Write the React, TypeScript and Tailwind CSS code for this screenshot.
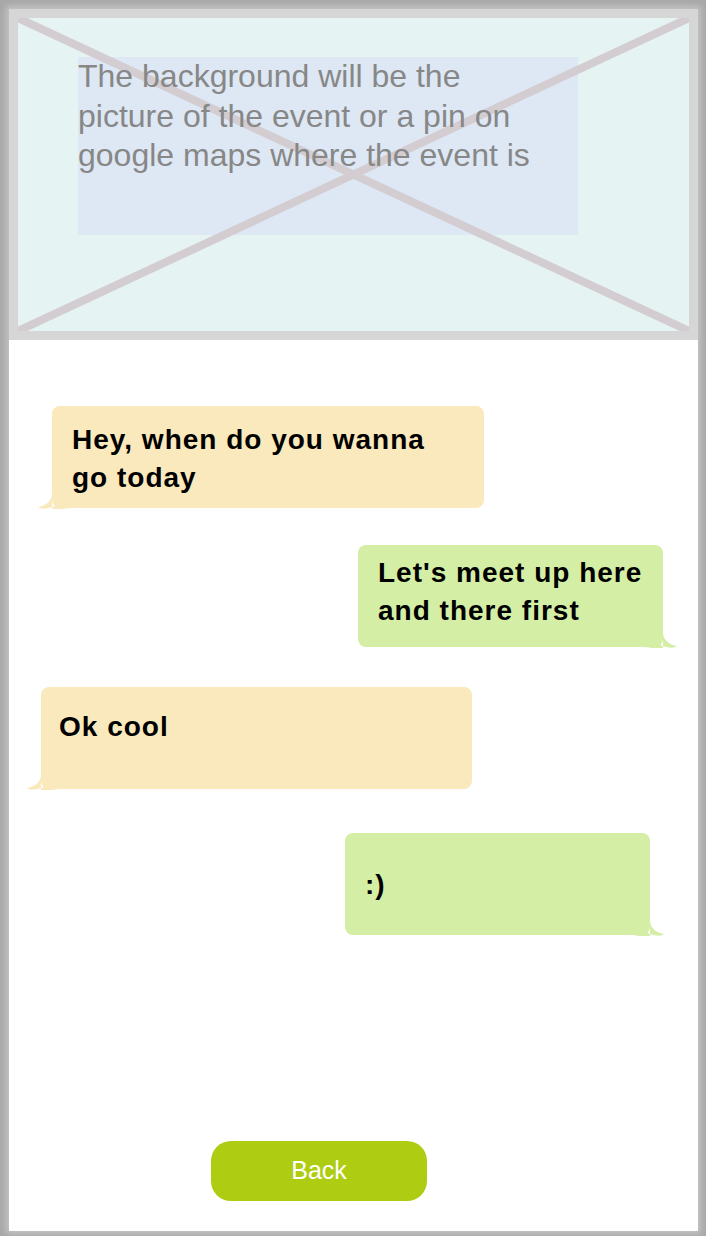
import React from "react";

function TailLeft({ color }: { color: string }) {
  return (
    <svg className="absolute -left-[14px] -bottom-[1px]" width="34" height="20" viewBox="0 0 34 20">
      <path
        d="M14 0 L14 6 Q13 15 0 18.5 Q2 20 8 19.5 Q14 19 19 16 Q24 20 34 20 L14 20 Z"
        fill={color}
      />
    </svg>
  );
}

function TailRight({ color }: { color: string }) {
  return (
    <svg className="absolute -right-[14px] -bottom-[1px]" width="34" height="20" viewBox="0 0 34 20">
      <path
        d="M20 0 L20 6 Q21 15 34 18.5 Q32 20 26 19.5 Q20 19 15 16 Q10 20 0 20 L20 20 Z"
        fill={color}
      />
    </svg>
  );
}

export default function App() {
  const yellow = "#f9e9bc";
  const green = "#d4eea6";
  const bubbleText =
    "font-['Liberation_Sans',Arial,sans-serif] font-bold text-[28px] tracking-[1px] leading-[38px] text-black";
  return (
    <div className="w-[706px] h-[1236px] bg-[#a8a8a8] pt-[9px] pl-[9px] pr-[8px] pb-[5px]">
      <div className="w-[689px] h-[1222px] bg-white flex flex-col shadow-[0_0_6px_3px_#c4c4c4]">
        {/* header image placeholder */}
        <div className="relative h-[331px] border-[9px] border-[#d6d6d6] bg-[#e6f3f3] pl-[60px] pt-[39px]">
          <div className="w-[500px] h-[178px] bg-[#dde8f4]" />
          <svg
            className="absolute inset-0 w-full h-full"
            viewBox="0 0 671 313"
            preserveAspectRatio="none"
          >
            <line x1="0" y1="0" x2="671" y2="313" stroke="#d3cdd1" strokeWidth="8" />
            <line x1="671" y1="0" x2="0" y2="313" stroke="#d3cdd1" strokeWidth="8" />
          </svg>
          <div className="absolute left-[60px] top-[39px] w-[480px] font-['Liberation_Sans',Arial,sans-serif] text-[32px] leading-[39.5px] text-[#878787]">
            The background will be the picture of the event or a pin on google maps where
            the event is
          </div>
        </div>

        {/* chat */}
        <div className="flex flex-col flex-1">
          <div
            className="relative ml-[43px] mt-[66px] w-[432px] h-[102px] rounded-[8px] pl-[20px] pt-[15px]"
            style={{ backgroundColor: yellow }}
          >
            <TailLeft color={yellow} />
            <div className={bubbleText}>
              Hey, when do you wanna
              <br />
              go today
            </div>
          </div>

          <div
            className="relative ml-[349px] mt-[37px] w-[305px] h-[102px] rounded-[8px] pl-[20px] pt-[9px]"
            style={{ backgroundColor: green }}
          >
            <TailRight color={green} />
            <div className={bubbleText}>
              Let's meet up here
              <br />
              and there first
            </div>
          </div>

          <div
            className="relative ml-[32px] mt-[40px] w-[431px] h-[102px] rounded-[8px] pl-[18px] pt-[21px]"
            style={{ backgroundColor: yellow }}
          >
            <TailLeft color={yellow} />
            <div className={bubbleText}>Ok cool</div>
          </div>

          <div
            className="relative ml-[336px] mt-[44px] w-[305px] h-[102px] rounded-[8px] pl-[20px] pt-[33px]"
            style={{ backgroundColor: green }}
          >
            <TailRight color={green} />
            <div className={bubbleText}>:)</div>
          </div>

          <button className="mt-auto mb-[30px] ml-[202px] w-[216px] h-[60px] rounded-[20px] bg-[#aecc12] text-white font-['Liberation_Sans',Arial,sans-serif] text-[25px]">
            Back
          </button>
        </div>
      </div>
    </div>
  );
}
